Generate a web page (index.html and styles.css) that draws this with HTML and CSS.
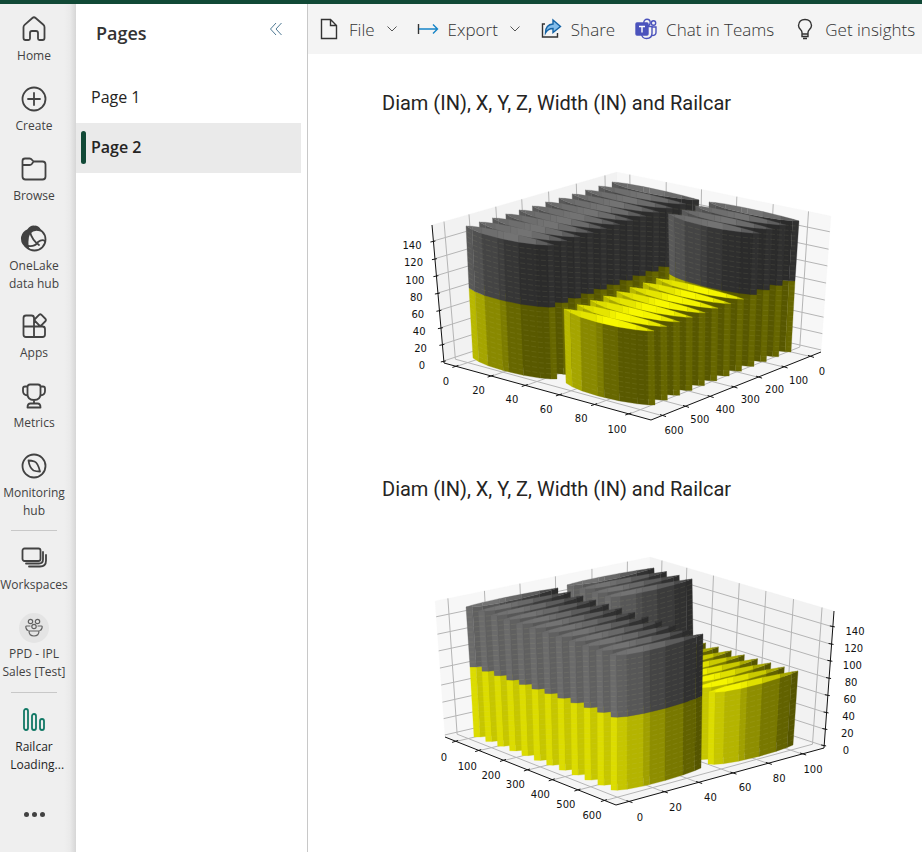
FILE: index.html
```html
<!DOCTYPE html>
<html lang="en">
<head>
<meta charset="utf-8">
<title>Railcar Loading</title>
<link rel="stylesheet" href="styles.css">
</head>
<body>
<div class="topbar"></div>
<div class="shell">
  <nav class="rail" aria-label="Main">
    <a class="rail-item" href="#"><svg class="icon" viewBox="0 0 28 28"><path d="M3.5 12.2 Q3.5 10.8 4.6 9.8 L12.4 3 Q14 1.6 15.600 3 L23.400 9.800 Q24.500 10.800 24.500 12.200 V23 Q24.500 25 22.500 25 H19.500 Q18 25 18 23.500 V18 Q18 16 16 16 H12 Q10 16 10 18 V23.500 Q10 25 8.500 25 H5.500 Q3.500 25 3.500 23 Z"/></svg><span>Home</span></a>
    <a class="rail-item" href="#"><svg class="icon" viewBox="0 0 28 28"><circle cx="14" cy="14" r="11.500"/><path d="M14 8V20M8 14H20"/></svg><span>Create</span></a>
    <a class="rail-item" href="#"><svg class="icon" viewBox="0 0 28 28"><path d="M2.500 6 Q2.500 3.500 5 3.500 H9.500 Q11 3.500 12 4.800 L13.500 6.500 H22.500 Q25.500 6.500 25.500 9.500 V21.500 Q25.500 24.500 22.500 24.500 H5.500 Q2.500 24.500 2.500 21.500 Z M2.500 10 H9.500 Q11 10 12 8.700 L13.500 6.500"/></svg><span>Browse</span></a>
    <a class="rail-item two" href="#"><svg class="icon" viewBox="0 0 28 28"><circle cx="14.500" cy="14.500" r="11"/><path class="solid" d="M8 5 Q11 .5 15 1.500 Q19 2 20 5.500 Q14 3.500 9.500 8 Q6.500 13 8 23 Q1 19 2 12 Q3 7 8 5Z"/><path d="M10 7 Q12 15 19 20 M8 21 Q15 22 18 17 Q22 14 25 16"/></svg><span>OneLake<br>data hub</span></a>
    <a class="rail-item" href="#"><svg class="icon" viewBox="0 0 28 28"><path d="M14 14.500H3.500V6Q3.500 3.500 6 3.500H11.500Q14 3.500 14 6V25H6Q3.500 25 3.500 22.500V14.500M14 14.500H22.500Q25 14.500 25 17V22.500Q25 25 22.500 25H14M19.300 2.700Q20.300 1.900 21.300 2.700L25.600 7Q26.400 8 25.600 9L21.300 13.300Q20.300 14.100 19.300 13.300L15 9Q14.200 8 15 7Z"/></svg><span>Apps</span></a>
    <a class="rail-item" href="#"><svg class="icon" viewBox="0 0 28 28"><path d="M7.500 5Q7.500 2.500 10 2.500H18Q20.500 2.500 20.500 5V12Q20.500 18 14 18Q7.500 18 7.500 12ZM7.500 4.500H5Q3 4.500 3 6.500V9Q3 13 7.500 13.500M20.500 4.500H23Q25 4.500 25 6.500V9Q25 13 20.500 13.500M14 18V21.500M10.500 21.500H17.500Q20.500 21.500 20.500 25.500H7.500Q7.500 21.500 10.500 21.500Z"/></svg><span>Metrics</span></a>
    <a class="rail-item two" href="#"><svg class="icon" viewBox="0 0 28 28"><circle cx="14" cy="14" r="11.500"/><path d="M8.500 8.500Q11.500 8.500 14.500 9.500Q18 11 20 19.500Q16 19.500 13.500 18.500Q9.500 16 8.500 8.500Z"/></svg><span>Monitoring<br>hub</span></a>
    <hr>
    <a class="rail-item" href="#"><svg class="icon" viewBox="0 0 28 28"><rect x="2.500" y="4.500" width="18" height="12.500" rx="2"/><path d="M6 19.500H19Q23 19.500 23 15.500V8M9 22.500H20Q26 22.500 26 16.500V11"/></svg><span>Workspaces</span></a>
    <a class="rail-item two team" href="#"><svg class="icon" viewBox="0 0 30 30"><circle class="disc" cx="15" cy="15" r="15"/><circle cx="11.500" cy="8.500" r="2.200"/><circle cx="18.500" cy="8.500" r="2.200"/><circle cx="15" cy="13.500" r="2.200"/><path d="M10 18H20Q20 23 15 23Q10 23 10 18ZM11 13H7.500Q6.500 13 7 15Q7.500 17 9 17.500M19 13H22.500Q23.500 13 23 15Q22.500 17 21 17.500"/></svg><span>PPD - IPL<br>Sales [Test]</span></a>
    <hr>
    <a class="rail-item two current" href="#"><svg class="icon" viewBox="0 0 28 28"><rect x="4" y="3" width="4" height="21" rx="2"/><rect x="12" y="8" width="4" height="16" rx="2"/><rect x="20" y="13" width="4" height="11" rx="2"/></svg><span>Railcar<br>&nbsp; Loading...</span></a>
    <button class="more" aria-label="More"><i></i><i></i><i></i></button>
  </nav>
  <aside class="pages">
    <header><h2>Pages</h2><button aria-label="Collapse"><svg viewBox="0 0 14 14"><path d="M7 1L1.500 7L7 13M12.500 1L7 7L12.500 13"/></svg></button></header>
    <a class="page" href="#">Page 1</a>
    <a class="page selected" href="#">Page 2</a>
  </aside>
  <main>
    <div class="toolbar">
      <button><svg class="tool" viewBox="0 0 22 22"><path d="M3.500 1.500H12.500L18.500 7.500V20.500H3.500ZM12.500 1.500V7.500H18.500"/></svg><span>File</span><svg class="chev" viewBox="0 0 10 6"><path d="M.5 .5L5 5L9.500 .5"/></svg></button>
      <button><svg class="tool" viewBox="0 0 22 22"><path d="M1.500 6V16"/><path class="blue" d="M2 11H20.500M16 6.500L20.500 11L16 15.500"/></svg><span>Export</span><svg class="chev" viewBox="0 0 10 6"><path d="M.5 .5L5 5L9.500 .5"/></svg></button>
      <button><svg class="tool" viewBox="0 0 22 22"><path d="M5 6H2.500V19H17.500V15"/><path class="share" d="M5.500 15Q5.500 6.500 13 6V2L20.500 8.500L13 14.500V10.500Q8 10.500 5.500 15Z"/></svg><span>Share</span></button>
      <button><svg class="tool teams" viewBox="0 0 22 22"><circle cx="12" cy="4.500" r="3.200"/><circle cx="18.500" cy="5" r="2.200"/><path d="M13 8.500H17V15Q17 20.500 11.500 20.500Q7 20.500 6.500 16M17 9H21V14.500Q21 17.500 17 17.500"/><rect class="plate" x="1" y="5" width="12" height="12" rx="1"/><path class="mark" d="M4 8.500H10M7 8.500V14.500"/></svg><span>Chat in Teams</span></button>
      <button><svg class="tool" viewBox="0 0 22 22"><path d="M8 16V14.500Q8 13 6.500 11.500Q4.500 9.500 4.500 7.500Q5 1.500 11 1.500Q17 1.500 17.500 7.500Q17.500 9.500 15.500 11.500Q14 13 14 14.500V16ZM8 16V18.500H14V16M9 20.500H13"/></svg><span>Get insights</span></button>
    </div>
    <section class="visual"><h3>Diam (IN), X, Y, Z, Width (IN) and Railcar</h3><svg class="chart" id="chart-a" viewBox="382 126 500 320" role="img" aria-label="Railcar load, right side"></svg></section>
    <section class="visual"><h3>Diam (IN), X, Y, Z, Width (IN) and Railcar</h3><svg class="chart" id="chart-b" viewBox="382 512 500 320" role="img" aria-label="Railcar load, left side"></svg></section>
  </main>
</div>
<script src="charts.js"></script>
</body>
</html>
```
FILE: styles.css
```css
* { box-sizing: border-box; }
body { margin: 0; background: #fff; color: #252423; font-family: "Open Sans", "Noto Sans", sans-serif; overflow: hidden; }
button { border: 0; background: none; padding: 0; font: inherit; color: inherit; }
a { color: inherit; text-decoration: none; }
svg { fill: none; flex: none; }
.topbar { height: 4px; background: #114936; }
.shell { display: flex; min-height: calc(100vh - 4px); }
.rail { width: 76px; flex: none; padding: 10px 8px 0 0; background: linear-gradient(90deg, #efefef 64px, #eaeaea 70px, #d6d6d6 76px); display: flex; flex-direction: column; align-items: center; }
.rail-item { height: 70px; width: 68px; display: flex; flex-direction: column; align-items: center; font-size: 12px; line-height: 18px; text-align: center; white-space: nowrap; color: #424242; }
.rail-item.two { height: 87px; }
.icon { width: 28px; height: 28px; margin: 1px 0 4px; stroke: #424242; stroke-width: 1.800; stroke-linejoin: round; stroke-linecap: round; }
.icon .solid { fill: #424242; }
.rail hr { width: 46px; margin: -8px 0 12px; border: 0; border-top: 1px solid #c8c8c8; }
.team .icon { width: 30px; height: 30px; margin: 0 0 2px; stroke: #616161; stroke-width: 1.200; }
.icon .disc { fill: #e4e4e4; stroke: none; }
.current { color: #242424; }
.current .icon { stroke: #117865; }
.more { display: flex; gap: 3px; padding: 20px 0; }
.more i { width: 5px; height: 5px; border-radius: 50%; background: #424242; }
.pages { width: 232px; flex: none; border-right: 1px solid #c8c8c8; }
.pages header { display: flex; justify-content: space-between; align-items: flex-start; height: 69px; padding: 15px 24px 0 20px; }
.pages h2 { margin: 0; font-size: 18px; line-height: 28px; font-weight: 600; color: #333; }
.pages header svg { display: block; width: 14px; height: 14px; margin-top: 3px; stroke: #507a94; }
.page { display: flex; align-items: center; height: 50px; margin-right: 6px; padding: 0 0 2px 15px; font-size: 16px; }
.page.selected { padding-left: 5px; gap: 5px; background: #eaeaea; font-weight: 600; }
.page.selected::before { content: ""; width: 5px; height: 33px; border-radius: 3px; background: #114936; }
main { flex: 1; min-width: 0; }
.toolbar { height: 50px; background: #f4f4f4; display: flex; align-items: center; gap: 20px; padding-left: 10px; color: #333; font-size: 17px; font-weight: 300; white-space: nowrap; overflow: hidden; }
.toolbar button { display: flex; align-items: center; gap: 9px; }
.tool { width: 22px; height: 22px; stroke: #333; stroke-width: 1.400; }
.tool .blue { stroke: #1684c7; }
.tool .share { stroke: #1463a5; fill: #83bdeb; }
.tool.teams { stroke: #4b53bc; }
.tool .plate { fill: #4b53bc; }
.tool .mark { stroke: #fff; }
.chev { width: 10px; height: 6px; margin-left: 3px; stroke: #555; }
.visual { padding: 35px 40px 0 74px; }
.visual + .visual { padding-top: 29px; }
.visual h3 { margin: 0; font: 400 20px/28px Roboto, sans-serif; color: #252423; }
.chart { display: block; width: 100%; max-width: 500px; height: auto; margin-top: 9px; }
.chart text { font: 10px "DejaVu Sans", sans-serif; fill: #111; text-anchor: middle; dominant-baseline: central; }
.grid { stroke: #b5b5b5; stroke-width: 1; }
.axis { stroke: #111; stroke-width: 1; }
.weave { fill: none; stroke: #d8d8a0; stroke-opacity: .13; stroke-width: .7; stroke-dasharray: 5 2; }
```
FILE: charts.js
```js
const mix = (a, b, t) => [a[0] + (b[0] - a[0]) * t, a[1] + (b[1] - a[1]) * t];
const X_STEPS = [.06, .23, .395, .56, .73, .895];
const Y_STEPS = [.065, .2, .345, .485, .63, .78, .935];
const Z_STEPS = [.116, .244, .367, .493, .618, .744, .865, .985];

function painter(id) {
  const svg = document.getElementById(id);
  const add = (tag, attrs, text) => {
    const el = document.createElementNS("http://www.w3.org/2000/svg", tag);
    for (const k in attrs) el.setAttribute(k, attrs[k]);
    if (text !== undefined) el.textContent = text;
    svg.appendChild(el);
  };
  return {
    poly: (pts, fill) => add("polygon", { points: pts.join(" "), fill, stroke: fill, "stroke-width": .3 }),
    line: (pts, cls) => add("polyline", { points: pts.join(" "), class: cls, fill: "none" }),
    label: (p, text) => add("text", { x: p[0], y: p[1] }, text)
  };
}

// Shape of one roll along its chord: position and drop below the chord.
const CUTS = [0, .07, .18, .36, .43, .6, .8, .93, 1];
const DROP = [0, .45, .8, 1, 1, .95, .65, .3, 0];

function roll(p, top, bottom, sag, shades, lid) {
  const at = (edge, i, s) => { const q = mix(edge[0], edge[1], CUTS[i]); return [q[0], q[1] + DROP[i] * s]; };
  const n = CUTS.length - 1;
  for (let i = 0; i < n; i++)
    p.poly([at(top, i, sag), at(top, i + 1, sag), at(bottom, i + 1, sag), at(bottom, i, sag)], shades[i]);
  const rows = Math.round((bottom[0][1] - top[0][1]) / 5);
  for (let r = 1; r < rows; r++) {
    const t = r / rows;
    p.line(CUTS.map((c, i) => mix(at(top, i, sag), at(bottom, i, sag), t)), "weave");
  }
  if (lid) for (let i = 0; i < n; i++)
    p.poly([at(top, i, -sag * .5), at(top, i + 1, -sag * .5), at(top, i + 1, sag), at(top, i, sag)], lid[i]);
}

function frame(p, c) {
  p.poly([c.lt, c.bt, c.bb, c.lb], c.fills[0]);
  p.poly([c.bt, c.rt, c.rb, c.bb], c.fills[1]);
  p.poly([c.lb, c.bb, c.rb, c.fb], "#f5f5f5");
  const [l, r] = c.xLeft ? [X_STEPS, Y_STEPS] : [Y_STEPS, X_STEPS];
  // Steps on the left wall also run along the front right edge of the floor.
  l.forEach(t => p.line([mix(c.lt, c.bt, t), mix(c.lb, c.bb, t), mix(c.fb, c.rb, t)], "grid"));
  r.forEach(t => p.line([mix(c.bt, c.rt, t), mix(c.bb, c.rb, t), mix(c.lb, c.fb, t)], "grid"));
  Z_STEPS.forEach(t => p.line([mix(c.lt, c.lb, t), mix(c.bt, c.bb, t), mix(c.rt, c.rb, t)], "grid"));
}

function axes(p, c) {
  p.line([c.lb, c.fb, c.rb], "axis");
  const z = c.xLeft ? [c.rt, c.rb] : [c.lt, c.lb];
  p.line(z, "axis");
  Z_STEPS.forEach(t => { const q = mix(z[0], z[1], t); p.line([[q[0] - 3, q[1] + (c.xLeft ? -1 : 1)], [q[0] + 2, q[1]]], "axis"); });
  const [l, r] = c.xLeft ? [X_STEPS, Y_STEPS] : [Y_STEPS, X_STEPS];
  l.forEach(t => { const q = mix(c.fb, c.rb, t); p.line([[q[0] - 2, q[1] - 1], [q[0] + 4, q[1] + 1]], "axis"); });
  r.forEach(t => { const q = mix(c.lb, c.fb, t); p.line([[q[0] - 4, q[1] + 1], [q[0] + 2, q[1] - 1]], "axis"); });
  // The third value bends the spacing for perspective.
  const run = ([from, to, bend], names) => names.forEach((s, i) => {
    const t = i / (names.length - 1);
    p.label(mix(from, to, t + bend * t * (1 - t)), s);
  });
  run(c.zLabels, [140, 120, 100, 80, 60, 40, 20, 0]);
  run(c.xLabels, [0, 20, 40, 60, 80, 100]);
  run(c.yLabels, [0, 100, 200, 300, 400, 500, 600]);
}

// A row of rolls; each corner is given for the nearest and for the farthest roll.
function row(p, spec, skin) {
  for (let i = 11; i >= 0; i--) {
    const t = i / 11;
    const s = t + (spec.bend || 0) * t * (1 - t);
    const [tl, tr, ml, mr, bl, br] = spec.corners.map(k => mix(k[0], k[1], s));
    const tall = i >= spec.tallFrom;
    const sag = spec.sag * (1 - .25 * t);
    roll(p, [ml, mr], [bl, br], sag, skin.yellow, tall ? null : skin.yellowLid);
    if (tall) roll(p, [tl, tr], [ml, mr], sag, skin.grey, skin.greyLid);
  }
}

const skinA = {
  yellow: ["#b8b800", "#a5a500", "#898900", "#7c7c00", "#676700", "#595900", "#575700", "#666600"],
  yellowLid: ["#dada00", "#dddd00", "#e5e500", "#f0f000", "#f8f800", "#f4f400", "#e6e600", "#c8c800"],
  grey: ["#595959", "#505050", "#444444", "#3e3e3e", "#363636", "#2e2e2e", "#2b2b2b", "#303030"],
  greyLid: ["#686868", "#6a6a6a", "#6e6e6e", "#717171", "#737373", "#6b6b6b", "#5e5e5e", "#505050"]
};
const a = painter("chart-a");
const cornersA = {
  lt: [432, 225], bt: [617, 172], rt: [831, 216], lb: [444, 363], bb: [619, 305], rb: [821, 352], fb: [651, 420],
  fills: ["#f2f2f2", "#f7f7f7"], xLeft: false,
  zLabels: [[412, 245], [422, 365], .03], xLabels: [[446, 381], [617, 429], -.06], yLabels: [[822, 371], [674, 430], -.06]
};
frame(a, cornersA);
row(a, { sag: 5, tallFrom: 0, corners: [
  [[466, 226], [612, 182]], [[554, 245], [699, 200]], [[469, 288], [612, 239]],
  [[555, 307], [697, 258]], [[473, 358], [613, 305]], [[557, 379], [696, 326]] ] }, skinA);
row(a, { sag: 5, tallFrom: 8, corners: [
  [[560, 246], [709, 202]], [[654, 266], [799, 221]], [[564, 309], [709, 261]],
  [[654, 331], [795, 281]], [[566, 383], [706, 332]], [[655, 405], [791, 352]] ] }, skinA);
axes(a, cornersA);

const skinB = {
  yellow: ["#dcdc00", "#c6c600", "#b4b400", "#a0a000", "#8e8e00", "#787800", "#626200", "#555500"],
  yellowLid: ["#e8e800", "#f5f500", "#f5f500", "#eeee00", "#e0e000", "#caca00", "#a8a800", "#7d7d00"],
  grey: ["#6b6b6b", "#606060", "#575757", "#4d4d4d", "#454545", "#3b3b3b", "#313131", "#2c2c2c"],
  greyLid: ["#6d6d6d", "#717171", "#737373", "#6e6e6e", "#686868", "#5c5c5c", "#4c4c4c", "#383838"]
};
const b = painter("chart-b");
const cornersB = {
  lt: [435, 601], bt: [650, 557], rt: [834, 611], lb: [445, 737], bb: [647, 690], rb: [824, 748], fb: [616, 805],
  fills: ["#f7f7f7", "#f2f2f2"], xLeft: true,
  zLabels: [[855, 631], [846, 750], .03], xLabels: [[640, 817], [813, 769], .03], yLabels: [[444, 757], [592, 815], -.07]
};
frame(b, cornersB);
row(b, { sag: 4, bend: .06, tallFrom: 8, corners: [
  [[712, 630], [567, 585]], [[800, 610], [654, 568]], [[709, 692], [570, 645]],
  [[798, 671], [656, 628]], [[708, 764], [570, 715]], [[793, 745], [656, 700]] ] }, skinB);
row(b, { sag: 4, bend: .06, tallFrom: 0, corners: [
  [[610, 655], [466, 607]], [[703, 634], [558, 588]], [[611, 717], [470, 667]],
  [[702, 696], [558, 648]], [[611, 790], [474, 737]], [[701, 768], [562, 718]] ] }, skinB);
axes(b, cornersB);
```
